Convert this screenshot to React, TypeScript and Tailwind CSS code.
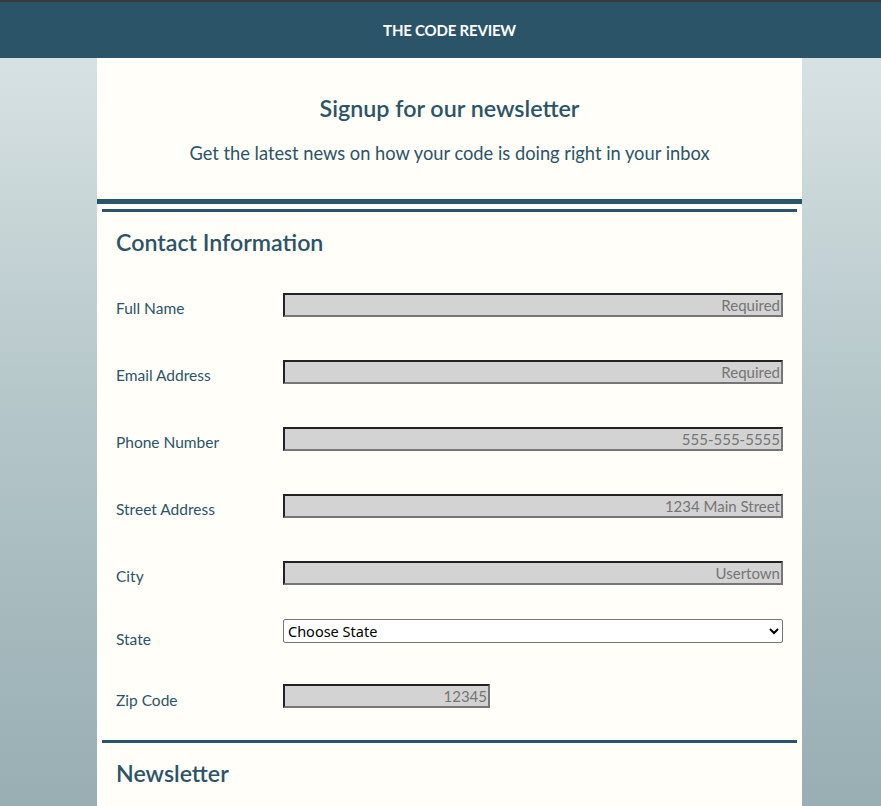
import React from 'react'

const fields = [
    { label: 'Full Name', placeholder: 'Required', gap: 'mt-[81px]' },
    { label: 'Email Address', placeholder: 'Required', gap: 'mt-[43px]' },
    { label: 'Phone Number', placeholder: '555-555-5555', gap: 'mt-[43px]' },
    { label: 'Street Address', placeholder: '1234 Main Street', gap: 'mt-[43px]' },
    { label: 'City', placeholder: 'Usertown', gap: 'mt-[43px]' },
]

const inputClass =
    "h-[24px] bg-[#d3d3d3] border-2 border-t-[#222222] border-l-[#222222] border-b-[#767676] border-r-[#767676] text-right pr-[1px] text-[15px] text-[#222] placeholder:text-[#757575] font-['Lato',sans-serif] outline-none"

export default function App() {
    return (
        <div className="min-h-[806px] bg-gradient-to-b from-[#dde6e7] via-[#b3c5c8] to-[#96acb1] font-['Lato',sans-serif] text-[#2b5468]">
            <header className="border-t-2 border-[#3a3a3a] bg-[#2b5468] h-[58px] flex items-center">
                <div className="ml-[97px] w-[705px] text-center text-white font-bold text-[15px] tracking-[-0.2px]">
                    THE CODE REVIEW
                </div>
            </header>

            <main className="ml-[97px] w-[705px] bg-[#fffef9] pb-[60px]">
                <section className="pt-[33px] pb-[34px] text-center">
                    <h1 className="text-[23.3px] font-semibold leading-[34px]">Signup for our newsletter</h1>
                    <p className="mt-[16px] text-[18.3px] leading-[24px]">
                        Get the latest news on how your code is doing right in your inbox
                    </p>
                </section>
                <div className="h-[5px] bg-[#2b5468]" />

                <fieldset className="mx-[5px] mt-[5px] border-t-[3px] border-[#2b5468] px-[14px] relative">
                    <h2 className="absolute left-[14px] top-[17px] text-[23.2px] font-semibold leading-[26px]">
                        Contact Information
                    </h2>
                    {fields.map((f) => (
                        <div key={f.label} className={`flex items-center h-[24px] ${f.gap}`}>
                            <label className="w-[167px] translate-y-[3px] text-[15.5px] leading-[24px]">{f.label}</label>
                            <input className={`${inputClass} w-[500px]`} placeholder={f.placeholder} />
                        </div>
                    ))}
                    <div className="flex items-center h-[24px] mt-[34px]">
                        <label className="w-[167px] translate-y-[8px] text-[15.5px] leading-[24px]">State</label>
                        <select className="w-[500px] h-[24px] bg-white border border-[#767676] rounded-[2px] text-[14.5px] text-black font-['Noto_Sans',sans-serif]">
                            <option>Choose State</option>
                        </select>
                    </div>
                    <div className="flex items-center h-[24px] mt-[41px] mb-[32px]">
                        <label className="w-[167px] translate-y-[4px] text-[15.5px] leading-[24px]">Zip Code</label>
                        <input className={`${inputClass} w-[207px]`} placeholder="12345" />
                    </div>
                </fieldset>

                <fieldset className="mx-[5px] border-t-[3px] border-[#2b5468] px-[14px] pt-[17px]">
                    <h2 className="text-[23.2px] font-semibold leading-[26px]">Newsletter</h2>
                </fieldset>
            </main>
        </div>
    )
}
